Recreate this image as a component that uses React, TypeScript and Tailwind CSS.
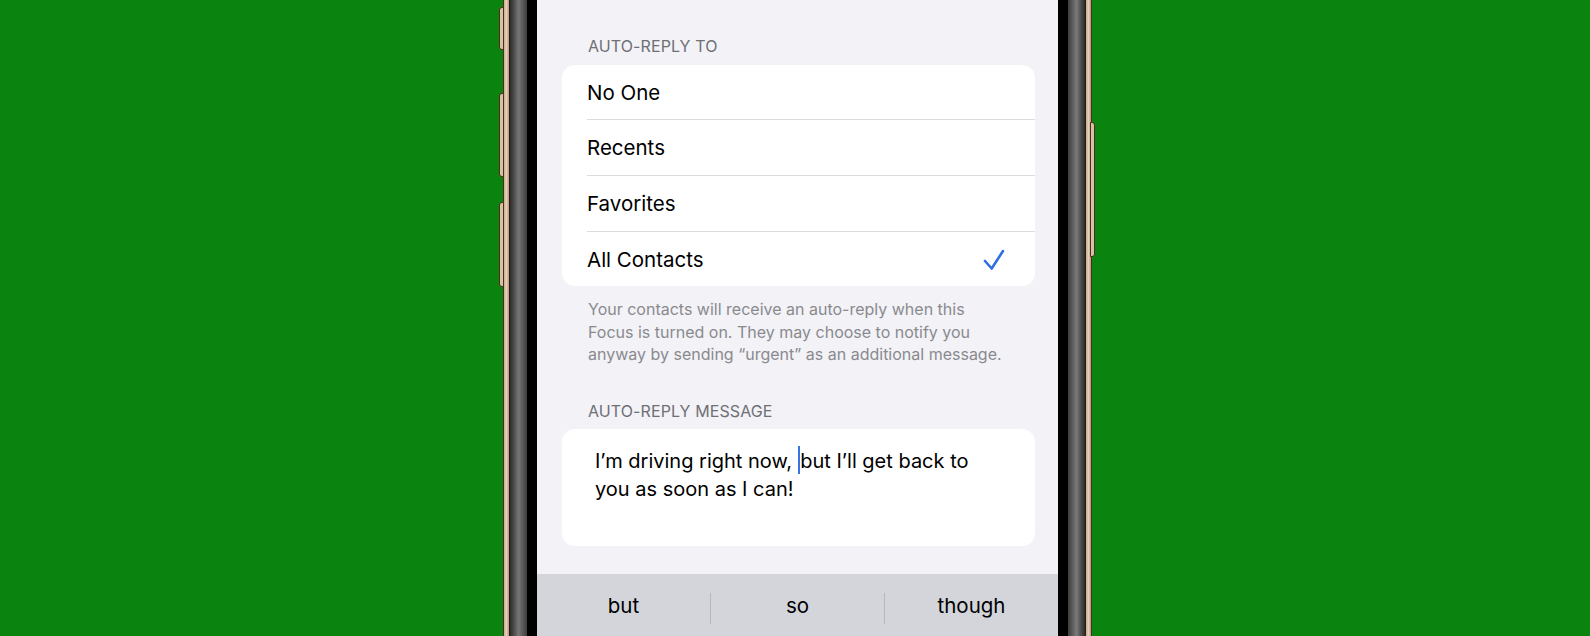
import { Fragment } from "react";

const font = { fontFamily: "Inter, 'Noto Sans', 'Liberation Sans', sans-serif" };

const options = [
  { label: "No One", checked: false, h: "h-[55px]" },
  { label: "Recents", checked: false, h: "h-[56px]" },
  { label: "Favorites", checked: false, h: "h-[56px]" },
  { label: "All Contacts", checked: true, h: "h-[54px]" },
];

const suggestions = ["but", "so", "though"];

function Check() {
  return (
    <svg width="22" height="22" viewBox="0 0 22 22" fill="none" className="mr-[30px]">
      <path d="M2 12 L8.7 19.5 L20 2" stroke="#2f6fe4" strokeWidth="2.6" strokeLinecap="round" strokeLinejoin="round" />
    </svg>
  );
}

function Bezel({ side }: { side: "left" | "right" }) {
  const bands = [
    <div key="a" className="w-px bg-[#4a2f1c]" />,
    <div key="b" className="w-[5px] bg-gradient-to-r from-[#c9ab8c] via-[#e4d0bb] to-[#b8967a]" />,
    <div key="c" className="w-px bg-[#2a1c12]" />,
    <div
      key="d"
      className={
        side === "left"
          ? "w-[17px] bg-gradient-to-r from-[#2c2c2c] via-[#767676] to-[#3d3d3d]"
          : "w-[17px] bg-gradient-to-r from-[#3d3d3d] via-[#7a7a7a] to-[#2c2c2c]"
      }
    />,
    <div key="e" className="w-[10px] bg-black" />,
  ];
  return <div className="flex h-full">{side === "left" ? bands : [...bands].reverse()}</div>;
}

export default function App() {
  return (
    <div className="h-[636px] w-full overflow-hidden bg-[#0a830f] flex justify-center pl-[5px]" style={font}>
      <div className="relative flex h-full">
        {/* side buttons */}
        <div className="absolute left-[-4px] top-[7px] h-[43px] w-[5px] rounded-l-[3px] border border-[#4a2f1c] bg-[#d9c1a6]" />
        <div className="absolute left-[-4px] top-[93px] h-[84px] w-[5px] rounded-l-[3px] border border-[#4a2f1c] bg-[#d9c1a6]" />
        <div className="absolute left-[-4px] top-[202px] h-[85px] w-[5px] rounded-l-[3px] border border-[#4a2f1c] bg-[#d9c1a6]" />
        <div className="absolute right-[-3px] top-[122px] h-[135px] w-[5px] rounded-r-[3px] border border-[#4a2f1c] bg-[#d9c1a6]" />

        <Bezel side="left" />

        <div className="flex h-full w-[521px] flex-col bg-[#f2f2f7]">
          <div className="pl-[25px] pr-[23px]">
            <div className="pt-[36px] pl-[26px] text-[16px] leading-[20px] uppercase tracking-[0.1px] text-[#6f6f74]">
              Auto-Reply To
            </div>

            <div className="mt-[9px] overflow-hidden rounded-[13px] bg-white">
              {options.map((o, i) => (
                <div key={o.label} className="pl-[25px]">
                  <div
                    className={`flex ${o.h} items-center justify-between pt-[2px] text-[20.5px] text-black ${
                      i < options.length - 1 ? "border-b border-[#dcdce0]" : ""
                    }`}
                  >
                    <span>{o.label}</span>
                    {o.checked && <Check />}
                  </div>
                </div>
              ))}
            </div>

            <p className="mt-[12px] pl-[26px] text-[16px] leading-[22.5px] text-[#8a8a8e]">
              Your contacts will receive an auto-reply when this
              <br />
              Focus is turned on. They may choose to notify you
              <br />
              anyway by sending “urgent” as an additional message.
            </p>

            <div className="mt-[35px] pl-[26px] text-[16px] leading-[20px] uppercase tracking-[0.1px] text-[#6f6f74]">
              Auto-Reply Message
            </div>

            <div className="mt-[8px] h-[117px] rounded-[13px] bg-white pl-[33px] pt-[17px]">
              <p className="whitespace-nowrap text-[20px] leading-[28px] text-black">
                I’m driving right now,{" "}
                <span className="inline-block h-[28px] w-[2.5px] bg-[#3a73e8] align-[-6px]" />
                but I’ll get back to
                <br />
                you as soon as I can!
              </p>
            </div>
          </div>

          <div className="mt-[28px] flex h-[70px] items-start bg-[#d3d5db]">
            {suggestions.map((s, i) => (
              <Fragment key={s}>
                {i > 0 && <div className="mt-[19px] h-[31px] w-px bg-[#b4b7bd]" />}
                <div className="flex-1 pt-[22px] text-center text-[20.5px] leading-[20.5px] text-black">{s}</div>
              </Fragment>
            ))}
          </div>
        </div>

        <Bezel side="right" />
      </div>
    </div>
  );
}
